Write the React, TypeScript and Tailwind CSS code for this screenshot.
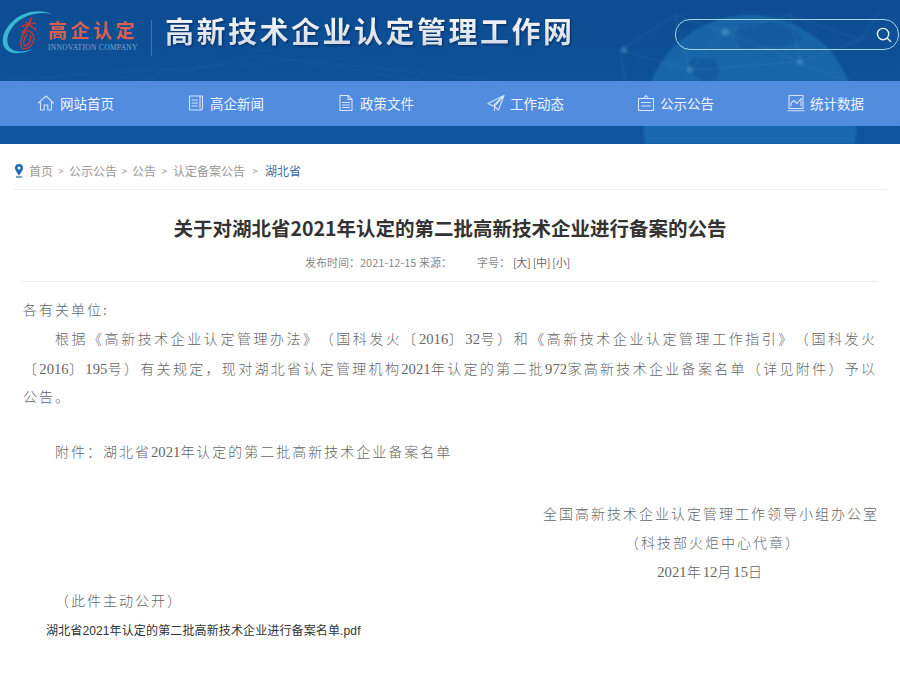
const navItems = [
  { label: '网站首页', icon: 'home' },
  { label: '高企新闻', icon: 'news' },
  { label: '政策文件', icon: 'doc' },
  { label: '工作动态', icon: 'send' },
  { label: '公示公告', icon: 'notice' },
  { label: '统计数据', icon: 'chart' },
];

function NavIcon({ name }: { name: string }) {
  const common = {
    width: 18,
    height: 18,
    viewBox: '0 0 18 18',
    fill: 'none',
    stroke: '#d5e4f7',
    strokeWidth: 1.1,
    strokeLinejoin: 'round' as const,
    strokeLinecap: 'round' as const,
  };
  if (name === 'home')
    return (
      <svg {...common}>
        <path d="M1.500 9 9 2l7.500 7" />
        <path d="M3.500 7.500V16h3.700v-5h3.600v5h3.700V7.500" />
      </svg>
    );
  if (name === 'news')
    return (
      <svg {...common}>
        <path d="M13 2H2.500v14H13c1.500 0 2.500-.6 2.500-2V2H13v12" />
        <path d="M5 6h5.500M5 9h5.500M5 12h5.500" />
      </svg>
    );
  if (name === 'doc')
    return (
      <svg {...common}>
        <path d="M3 1.500h8l4 4v11H3z" />
        <path d="M11 1.500v4h4M5.500 8.500h7M5.500 11h7M5.500 13.500h7" />
      </svg>
    );
  if (name === 'send')
    return (
      <svg {...common}>
        <path d="M17 1.500 1 9.500l5 2.500zM17 1.500 11.500 16 7.500 12.500M17 1.500 7.500 12.500V16.500" />
      </svg>
    );
  if (name === 'notice')
    return (
      <svg {...common}>
        <path d="M1.500 4.500h15v12h-15z" />
        <path d="M6.500 4.500 9 1.500l2.500 3M4.500 8.500h9M4.500 12h9" />
      </svg>
    );
  return (
    <svg {...common}>
      <path d="M2 1.500h14v13H2zM1 16.800h16" />
      <path d="M4 12V9l3-2.500 3 3L14 4.500V12" />
    </svg>
  );
}

function HeaderBackdrop() {
  return (
    <svg className="absolute inset-0 blur-[1px]" width="900" height="144" viewBox="0 0 900 144">
      <circle cx="750" cy="122" r="107" fill="#1f78b8" opacity="0.55" />
      <path d="M740 25c30-8 55 0 62 14-18 14-40 4-50 10-14 2-22-12-12-24zM690 60c20-8 34 4 28 18-12 8-34-2-28-18z" fill="#11599f" opacity="0.8" />
      <g stroke="#4d93cc" strokeWidth="0.7" opacity="0.4" fill="none">
        <path d="M620 50 675 15 725 32 790 15 860 40 880 10M620 50 690 70 725 32 800 62 860 40M690 70 800 62 845 81M625 81 620 50M675 15 690 70M790 15 800 62" />
        <path d="M0 80 300 60 500 81M140 81 260 55 420 81M900 30 860 40" opacity="0.5" />
      </g>
      <g fill="#5ea4d6" opacity="0.4">
        <circle cx="725" cy="32" r="4" />
        <circle cx="624" cy="50" r="3" />
        <circle cx="800" cy="62" r="3" />
        <circle cx="690" cy="70" r="3" />
      </g>
    </svg>
  );
}

function Logo() {
  return (
    <div className="relative flex h-full w-[151px] shrink-0">
      <svg className="absolute left-0 top-0" width="56" height="60" viewBox="0 0 56 60" fill="none">
        <path d="M52 14C40 9 24 11 13 21C2 31 -1 45 8 51C15 55 26 53 33 49C25 52 15 53 10 48C5 42 7 32 16 23C26 14 40 11 52 14Z" fill="#37b7d3" />
        <path d="M26 31C20 37 19 49 24 49C31 49 37 39 32 33C30 31 28 30 26 31ZM27 34C23 39 23 46 25 46C29 45 32 39 30 35" stroke="#d2342f" strokeWidth="1.300" />
        <path d="M22 26 35 23M31 18C30 24 27 28 22 33M26 22 36 30" stroke="#d2342f" strokeWidth="1.600" strokeLinecap="round" />
      </svg>
      <div className="ml-[48px] pt-[18px] w-[90px]">
        <div className="text-[19px] leading-[23px] tracking-[3.500px] font-bold text-[#d9604e] whitespace-nowrap [font-family:'Noto_Sans_CJK_SC',sans-serif]">
          高企认定
        </div>
        <div className="mt-[3px] text-[7.500px] leading-[7px] tracking-[0.300px] whitespace-nowrap text-[#7fa6cf] [font-family:'Liberation_Serif',serif]">
          INNOVATION COMPANY
        </div>
      </div>
    </div>
  );
}

function Header() {
  return (
    <header className="relative h-[144px] bg-gradient-to-b from-[#0d4c92] to-[#0f559f] overflow-hidden">
      <HeaderBackdrop />
      <div className="relative flex h-[81px]">
        <Logo />
        <div className="mt-[20px] h-[36px] w-px bg-[#3f74ad]" />
        <h1 className="ml-[13px] mt-[10px] text-[29px] leading-[40px] tracking-[2.500px] font-bold whitespace-nowrap bg-gradient-to-b from-white to-[#a9b8c9] bg-clip-text text-transparent drop-shadow-[1px_1px_1px_rgba(0,20,60,0.6)] [font-family:'Noto_Sans_CJK_SC',sans-serif]">
          高新技术企业认定管理工作网
        </h1>
        <div className="ml-auto mr-[1px] mt-[19px] flex h-[31px] w-[224px] items-center justify-end rounded-[15px] border border-[#a6d6e6] pr-[6px]">
          <svg width="16" height="16" viewBox="0 0 17 17" fill="none" stroke="#e6f1f8" strokeWidth="1.500" strokeLinecap="round">
            <circle cx="7.500" cy="7.500" r="6" />
            <path d="M12 12l3.500 3.500" />
          </svg>
        </div>
      </div>
      <nav className="relative grid h-[45px] grid-cols-6 bg-[#518cdf]">
        {navItems.map((item) => (
          <div key={item.label} className="flex items-center gap-[5px] pb-[1px] pl-[37px] text-[13.500px] text-[#f0f5fc]">
            <NavIcon name={item.icon} />
            <span>{item.label}</span>
          </div>
        ))}
      </nav>
    </header>
  );
}

function Breadcrumb() {
  return (
    <div className="mx-[13px] flex h-[46px] items-end border-b border-[#eeeeee] pb-[10px] pl-[2px] text-xs text-[#999999]">
      <svg className="mr-[6px] mb-[1px]" width="8" height="14" viewBox="0 0 8 14">
        <path d="M4 0a4 4 0 0 1 4 4c0 2.500-2.500 5-4 7.500C2.500 9 0 6.500 0 4a4 4 0 0 1 4-4z" fill="#1f6cb0" />
        <circle cx="4" cy="4" r="1.500" fill="#fff" />
        <path d="M1 13h6" stroke="#1f6cb0" strokeWidth="1.200" />
      </svg>
      <span>首页</span>
      <span className="w-[16px] text-center text-[10px] leading-[16px]">&gt;</span>
      <span>公示公告</span>
      <span className="w-[15px] text-center text-[10px] leading-[16px]">&gt;</span>
      <span>公告</span>
      <span className="w-[17px] text-center text-[10px] leading-[16px]">&gt;</span>
      <span>认定备案公告</span>
      <span className="w-[20px] text-center text-[10px] leading-[16px]">&gt;</span>
      <span className="text-[#3f6f9f]">湖北省</span>
    </div>
  );
}

function ArticleHead() {
  return (
    <div className="mx-[22px] border-b border-[#eeeeee] text-center">
      <h2 className="mt-[21px] text-[19.500px] leading-[34px] font-semibold text-[#333333]">
        关于对湖北省2021年认定的第二批高新技术企业进行备案的公告
      </h2>
      <div className="mt-[9px] h-[27px] pl-[283px] text-left text-[11px] leading-[16px] text-[#888888]">
        发布时间：2021-12-15 来源：
        <span className="ml-[25px]">字号：</span>
        <span className="ml-[3px] tracking-[-0.300px] text-[#666666]">[大] [中] [小]</span>
      </div>
    </div>
  );
}

function Num({ children }: { children: string }) {
  return <span className="text-[14.700px] tracking-normal">{children}</span>;
}

export default function App() {
  return (
    <div className="min-h-[677px] w-[900px] bg-white [font-family:'Noto_Sans_CJK_SC',sans-serif]">
      <Header />
      <Breadcrumb />
      <ArticleHead />
      <article className="ml-[23px] mr-[21px] mt-[14.500px] text-[14px] leading-[28.600px] tracking-[2px] font-light text-[#666666] [text-spacing-trim:space-all] [font-family:'Liberation_Serif','Noto_Sans_CJK_SC',serif]">
        <p>各有关单位:</p>
        <p className="indent-[32px] pr-[2px] text-justify">
          <span>根据《高新技术企业认定管理办法》（国科发火〔</span><Num>2016</Num>〕<Num>32</Num>号）和《高新技术企业认定管理工作指引》（国科发火<span>〔</span><Num>2016</Num>〕<Num>195</Num>号）有关规定，现对湖北省认定管理机构<Num>2021</Num>年认定的第二批<Num>972</Num>家高新技术企业备案名单（详见附件）予以<span>公告。</span>
        </p>
        <p className="mt-[25px] indent-[32px]">
          附件：湖北省<Num>2021</Num>年认定的第二批高新技术企业备案名单
        </p>
        <p className="mt-[33.500px] text-right">全国高新技术企业认定管理工作领导小组办公室</p>
        <p className="text-right pr-[78px]">（科技部火炬中心代章）</p>
        <p className="text-right pr-[115px]">
          <Num>2021</Num>年<Num>12</Num>月<Num>15</Num>日
        </p>
        <p className="indent-[32px]">（此件主动公开）</p>
      </article>
      <a className="ml-[46px] mt-[1px] block text-xs leading-[29px] tracking-[0.130px] text-[#333333] [font-family:'Liberation_Sans','Noto_Sans_CJK_SC',sans-serif]">
        湖北省2021年认定的第二批高新技术企业进行备案名单.pdf
      </a>
    </div>
  );
}
